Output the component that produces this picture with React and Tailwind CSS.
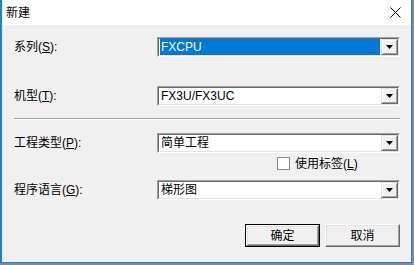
import React from "react";

const font = { fontFamily: '"Liberation Sans", "Noto Sans CJK SC", sans-serif' };

function Combo({ value, selected }) {
  return (
    <div className="w-[243px] h-[20px] border border-t-[#a0a0a0] border-l-[#a0a0a0] border-b-white border-r-white">
      <div className="h-full border border-t-[#696969] border-l-[#696969] border-b-[#e3e3e3] border-r-[#e3e3e3] bg-white flex">
        <div className="flex-1 flex items-center pl-px pr-px">
          <div
            className={
              "h-full w-full flex items-center pl-[1px] text-[12px] leading-none " +
              (selected ? "bg-[#0078d7] text-white" : "text-black")
            }
          >
            {value}
          </div>
        </div>
        <div className="w-[17px] h-full border border-t-[#e3e3e3] border-l-[#e3e3e3] border-b-[#696969] border-r-[#696969]">
          <div className="w-full h-full border border-t-white border-l-white border-b-[#a0a0a0] border-r-[#a0a0a0] bg-[#f0f0f0] flex items-center justify-center">
            <svg width="7" height="4" viewBox="0 0 7 4">
              <polygon points="0,0 7,0 3.5,4" fill="#000" />
            </svg>
          </div>
        </div>
      </div>
    </div>
  );
}

function Label({ text, k }) {
  return (
    <span>
      {text}(<span className="underline underline-offset-[1px]">{k}</span>):
    </span>
  );
}

function Row({ label, children }) {
  return (
    <div className="flex items-center h-[20px]">
      <div className="w-[143px] text-[12px] leading-none text-black">{label}</div>
      {children}
    </div>
  );
}

function Btn({ label, isDefault }) {
  return (
    <div className={"w-[75px] h-[23px] " + (isDefault ? "border border-black" : "")}>
      <div className="w-full h-full border border-t-white border-l-white border-b-[#696969] border-r-[#696969]">
        <div className="w-full h-full border border-t-[#e3e3e3] border-l-[#e3e3e3] border-b-[#a0a0a0] border-r-[#a0a0a0] bg-[#f0f0f0] flex items-center justify-center text-[12px] leading-none text-black">
          {label}
        </div>
      </div>
    </div>
  );
}

export default function App() {
  return (
    <div className="w-[414px] h-[265px] bg-[#7d8a9b]" style={font}>
      <div className="w-[412px] h-[263px] border-l-[2px] border-r border-b border-[#1883d7] flex flex-col">
        <div className="h-[25px] bg-white flex items-center justify-between pl-[4px] pr-[10px]">
          <span className="text-[12px] leading-none text-black">新建</span>
          <svg width="11" height="11" viewBox="0 0 11 11">
            <path d="M0.5 0.5 L10.5 10.5 M10.5 0.5 L0.5 10.5" stroke="#000" strokeWidth="1" />
          </svg>
        </div>
        <div className="flex-1 bg-[#f0f0f0] pl-[12px] pt-[12px]">
          <Row label={<Label text="系列" k="S" />}>
            <Combo value="FXCPU" selected />
          </Row>
          <div className="mt-[29px]">
            <Row label={<Label text="机型" k="T" />}>
              <Combo value="FX3U/FX3UC" />
            </Row>
          </div>
          <div className="mt-[12px] w-[386px] border-t border-t-[#a0a0a0] border-b border-b-white" />
          <div className="mt-[13px]">
            <Row label={<Label text="工程类型" k="P" />}>
              <Combo value="简单工程" />
            </Row>
          </div>
          <div className="mt-[4px] h-[13px] flex items-center pl-[263px]">
            <div className="w-[13px] h-[13px] border border-[#8a8a8a] bg-white" />
            <span className="ml-[5px] text-[12px] leading-none text-black">
              使用标签(<span className="underline underline-offset-[1px]">L</span>)
            </span>
          </div>
          <div className="mt-[10px]">
            <Row label={<Label text="程序语言" k="G" />}>
              <Combo value="梯形图" />
            </Row>
          </div>
          <div className="mt-[24px] flex justify-end pr-[11px] gap-[5px]">
            <Btn label="确定" isDefault />
            <Btn label="取消" />
          </div>
        </div>
      </div>
    </div>
  );
}
